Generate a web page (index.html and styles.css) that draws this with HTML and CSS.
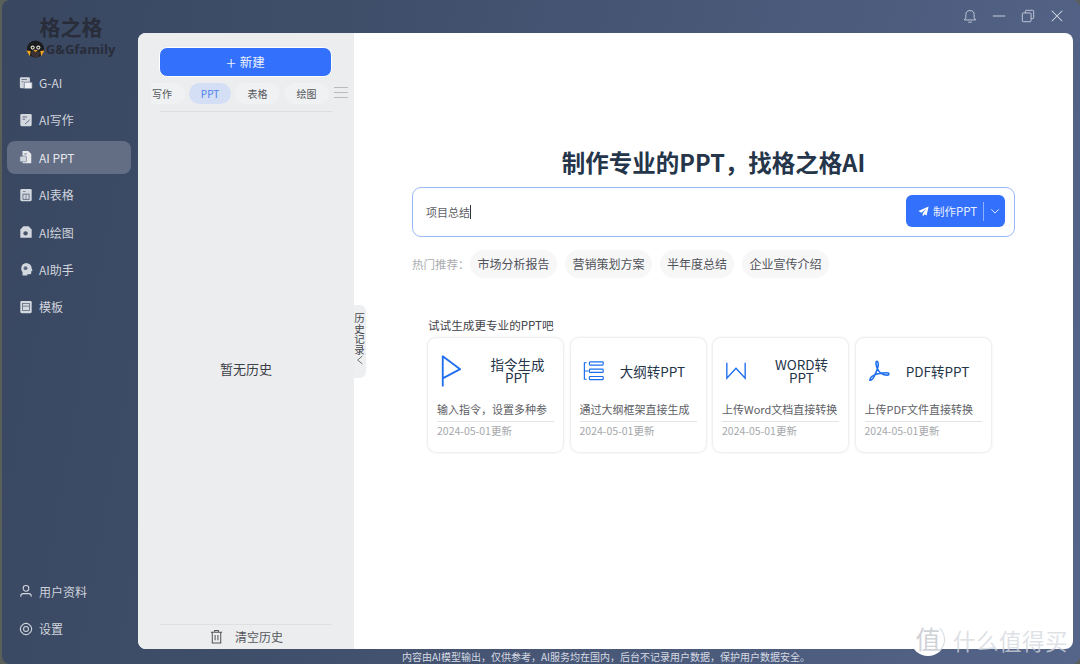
FILE: index.html
```html
<!DOCTYPE html>
<html lang="zh">
<head>
<meta charset="utf-8">
<title>格之格</title>
<link rel="stylesheet" href="styles.css">
</head>
<body>
<div class="window">
  <aside class="sidebar">
    <div class="brand">
      <div class="brand-name">格之格</div>
      <div class="brand-sub">
        <svg class="penguin" viewBox="0 0 20 20" width="19" height="19"><circle cx="10" cy="9.500" r="9" fill="#1b1a1c"/><ellipse cx="10" cy="14" rx="4.500" ry="4.500" fill="#3a3232"/><circle cx="7" cy="8" r="2.200" fill="#d8d4c8"/><circle cx="13" cy="8" r="2.200" fill="#d8d4c8"/><circle cx="7" cy="8" r="1" fill="#1b1a1c"/><circle cx="13" cy="8" r="1" fill="#1b1a1c"/><path d="M8 10.500h4l-2 2.500z" fill="#f0a020"/><path d="M.5 11l4.500.5-1 5.500zM19.500 11l-4.500.5 1 5.500z" fill="#eda41f"/></svg>
        <span>G&amp;Gfamily</span>
      </div>
    </div>
    <nav class="nav">
      <a class="nav-item"><svg class="nav-icon" viewBox="0 0 16 16"><rect x="1" y="1.500" width="11.500" height="12.500" rx="1.500" fill="#d3d7de"/><rect x="6" y="7" width="9" height="7.500" rx="1" fill="#eef0f3" stroke="#5d6a80" stroke-width=".8"/><path d="M3 4h6M3 6.500h2" stroke="#5d6a80"/></svg><span>G-AI</span></a>
      <a class="nav-item"><svg class="nav-icon" viewBox="0 0 16 16"><rect x="1.500" y="1" width="13" height="14" rx="1.500" fill="#d3d7de"/><path d="M4 4.500h5M4 7h3M7 12.500l5-4.500" stroke="#5d6a80" stroke-width="1.100"/></svg><span>AI写作</span></a>
      <a class="nav-item active"><svg class="nav-icon" viewBox="0 0 16 16"><path d="M4 1h6.500L14 4.500V15H4z" fill="#e6e8ec"/><rect x="1" y="7" width="7.500" height="6.500" rx="1" fill="#d3d7de" stroke="#667389" stroke-width=".7"/><path d="M6 4.500h3" stroke="#667389"/></svg><span>AI PPT</span></a>
      <a class="nav-item"><svg class="nav-icon" viewBox="0 0 16 16"><rect x="1.500" y="1" width="13" height="14" rx="1.500" fill="#d3d7de"/><rect x="4.500" y="7" width="7" height="6" fill="none" stroke="#5d6a80"/><path d="M4.500 4h3M8 7v6" stroke="#5d6a80" stroke-width=".8"/></svg><span>AI表格</span></a>
      <a class="nav-item"><svg class="nav-icon" viewBox="0 0 16 16"><path d="M5 1.500h6l3.500 3.500v9.500H1.500V5z" fill="#d3d7de"/><circle cx="7.500" cy="9.500" r="2.500" fill="#4a566c"/></svg><span>AI绘图</span></a>
      <a class="nav-item"><svg class="nav-icon" viewBox="0 0 16 16"><path d="M8 1a6.500 6.500 0 0 1 6.500 6.500l1 2.500-1.500.5v2a1.500 1.500 0 0 1-1.500 1.500H9.500v1.500H4v-4A6.500 6.500 0 0 1 8 1z" fill="#d3d7de"/><circle cx="7.500" cy="7" r="2.200" fill="#5d6a80"/></svg><span>AI助手</span></a>
      <a class="nav-item"><svg class="nav-icon" viewBox="0 0 16 16"><rect x="1.500" y="1" width="13" height="14" rx="1.500" fill="#d3d7de"/><rect x="4" y="4" width="8" height="8" fill="none" stroke="#5d6a80" stroke-width=".9"/><path d="M4 7h8" stroke="#5d6a80" stroke-width=".9"/></svg><span>模板</span></a>
    </nav>
    <div class="nav nav-bottom">
      <a class="nav-item"><svg class="nav-icon" viewBox="0 0 16 16" fill="none" stroke="#d3d7de" stroke-width="1.200"><circle cx="8" cy="5" r="3.200"/><path d="M2 14.500v-.5a3 3 0 0 1 3-3h6a3 3 0 0 1 3 3v.5"/></svg><span>用户资料</span></a>
      <a class="nav-item"><svg class="nav-icon" viewBox="0 0 16 16" fill="none" stroke="#d3d7de" stroke-width="1.200"><path d="M5 2.300l3-1 3 1 2.700 2.700.8 3-.8 3L11 13.700l-3 1-3-1L2.300 11l-.8-3 .8-3z" stroke-linejoin="round"/><circle cx="8" cy="8" r="2.800"/></svg><span>设置</span></a>
    </div>
  </aside>

  <div class="content">
    <header class="titlebar">
      <svg class="tb-icon" viewBox="0 0 16 16" fill="none" stroke="#c3cad8" stroke-width="1.100"><path d="M1.500 12.500h13l-1.800-2.500V6.500a4.700 4.700 0 0 0-9.400 0V10z" stroke-linejoin="round"/><path d="M6 15h4"/></svg>
      <svg class="tb-icon" viewBox="0 0 16 16" fill="none" stroke="#c3cad8" stroke-width="1.200"><path d="M1 8h14"/></svg>
      <svg class="tb-icon" viewBox="0 0 16 16" fill="none" stroke="#c3cad8" stroke-width="1.100"><rect x="1.500" y="4.500" width="10" height="10" rx="1"/><path d="M5 4.500V2.500a1 1 0 0 1 1-1h7.500a1 1 0 0 1 1 1V10a1 1 0 0 1-1 1h-2"/></svg>
      <svg class="tb-icon" viewBox="0 0 16 16" fill="none" stroke="#d5dae4" stroke-width="1.200"><path d="M2 2l12 12M14 2L2 14"/></svg>
    </header>

    <div class="panel">
      <section class="history">
        <button class="new-btn"><span class="plus">+</span>新建</button>
        <div class="tabs-row">
          <div class="tabs">
            <span class="tab tab-cut">写作</span>
            <span class="tab tab-ppt">PPT</span>
            <span class="tab">表格</span>
            <span class="tab">绘图</span>
          </div>
          <div class="burger"><i></i><i></i><i></i></div>
        </div>
        <div class="history-body">暂无历史</div>
        <div class="history-foot">
          <svg class="trash" viewBox="0 0 16 16" fill="none" stroke="#555" stroke-width="1.100"><path d="M2 3.500h12M6 3.500V1.500h4v2M3.500 3.500V15h9V3.500M6.500 6.500v5.500M9.500 6.500v5.500"/></svg>
          <span>清空历史</span>
        </div>
        <div class="history-toggle"><span class="toggle-text">历史记录</span><svg viewBox="0 0 10 12" width="8" height="10" fill="none" stroke="#555" stroke-width="1"><path d="M8 1L2 6l6 5"/></svg></div>
      </section>

      <main class="main">
        <h1 class="headline">制作专业的PPT，找格之格AI</h1>
        <div class="search">
          <span class="search-text">项目总结<i class="caret"></i></span>
          <div class="make-btn">
            <svg viewBox="0 0 14 14" width="11" height="11"><path d="M13.500.5L.5 6.500l4 2 6-5-4.500 6v4l2.500-3 2.500 1.500z" fill="#fff"/></svg>
            <span class="make-label">制作PPT</span>
            <i class="make-sep"></i>
            <svg viewBox="0 0 12 12" width="10" height="10" fill="none" stroke="#fff" stroke-width="1"><path d="M1.500 4l4.500 4.500L10.500 4"/></svg>
          </div>
        </div>
        <div class="hot">
          <span class="hot-label">热门推荐：</span>
          <span class="chip">市场分析报告</span>
          <span class="chip">营销策划方案</span>
          <span class="chip">半年度总结</span>
          <span class="chip">企业宣传介绍</span>
        </div>
        <div class="try-title">试试生成更专业的PPT吧</div>
        <div class="cards">
          <article class="card">
            <div class="card-head">
              <svg class="card-icon" viewBox="0 0 24 36" fill="none" stroke="#1f6fee" stroke-width="2"><path d="M3 1v34M3 2l19 14L3 26" stroke-linejoin="round"/></svg>
              <div class="card-title">指令生成PPT</div>
            </div>
            <p class="card-desc">输入指令，设置多种参</p>
            <div class="card-date">2024-05-01更新</div>
          </article>
          <article class="card">
            <div class="card-head">
              <svg class="card-icon" viewBox="0 0 24 24" fill="none" stroke="#1f6fee" stroke-width="1.300"><path d="M4 3H1.500v18H4M1.500 12H6"/><rect x="7" y="2" width="15" height="3.500" rx=".8"/><rect x="7" y="10" width="15" height="3.500" rx=".8"/><rect x="7" y="18" width="15" height="3.500" rx=".8"/></svg>
              <div class="card-title">大纲转PPT</div>
            </div>
            <p class="card-desc">通过大纲框架直接生成</p>
            <div class="card-date">2024-05-01更新</div>
          </article>
          <article class="card">
            <div class="card-head">
              <svg class="card-icon" viewBox="0 0 24 24" fill="none" stroke="#1f6fee" stroke-width="1.500"><path d="M2 3v17l10-11 10 11V3"/></svg>
              <div class="card-title title-word">WORD转PPT</div>
            </div>
            <p class="card-desc">上传Word文档直接转换</p>
            <div class="card-date">2024-05-01更新</div>
          </article>
          <article class="card">
            <div class="card-head">
              <svg class="card-icon" viewBox="0 0 24 24" fill="none" stroke="#1f6fee" stroke-width="1.700"><path d="M2 22c3 1 7-8 9-15 .6-3-.2-5.500-1.300-5.500S8 4 10 9c2 4.500 6 7.500 11 7.500 2.500 0 2.500-2.500 0-2.500-4 0-13 1-17 4-2 2-2 3.500-2 4z" stroke-linejoin="round"/></svg>
              <div class="card-title">PDF转PPT</div>
            </div>
            <p class="card-desc">上传PDF文件直接转换</p>
            <div class="card-date">2024-05-01更新</div>
          </article>
        </div>
      </main>
    </div>

    <footer class="notice">内容由AI模型输出，仅供参考，AI服务均在国内，后台不记录用户数据，保护用户数据安全。</footer>
  </div>
</div>
<div class="watermark"><span class="wm-mark">值</span><span class="wm-text">什么值得买</span></div>
</body>
</html>
```

FILE: styles.css
```css
* { box-sizing: border-box; }
html, body { margin: 0; padding: 0; height: 100%; }
body {
  width: 1080px;
  height: 664px;
  overflow: hidden;
  background: #5b5f5a;
  font-family: "Noto Sans CJK SC", "Noto Sans", sans-serif;
  position: relative;
}
.window {
  height: 664px;
  margin-left: 2px;
  border-radius: 8px;
  display: flex;
  background: linear-gradient(100deg, #394761 0%, #3f4e69 30%, #55658a 100%);
  overflow: hidden;
}
.sidebar {
  width: 136px;
  flex: none;
  display: flex;
  flex-direction: column;
  padding-bottom: 19px;
}
.brand {
  height: 66px;
  padding-top: 11px;
  display: flex;
  flex-direction: column;
  align-items: center;
}
.brand-name {
  font-size: 21px;
  line-height: 30px;
  font-weight: 700;
  color: #282d39;
  margin-left: 2px;
  font-family: "Noto Sans CJK SC", serif;
}
.brand-sub {
  display: flex;
  align-items: center;
  gap: 1px;
  margin-top: -1px;
  margin-left: 1px;
  font-family: "Open Sans", sans-serif;
  font-weight: 700;
  font-size: 13px;
  line-height: 19px;
  color: #282d39;
}
.penguin { flex: none; }
.nav { display: flex; flex-direction: column; gap: 4.400px; padding-left: 5px; }
.nav-bottom { margin-top: auto; }
.nav-item {
  width: 124px;
  height: 33px;
  border-radius: 8px;
  padding-left: 12px;
  display: flex;
  align-items: center;
  gap: 6px;
  font-size: 12px;
  color: #d0d4dc;
}
.nav-item.active { background: #636e84; color: #e6e8ec; }
.nav-icon { width: 14px; height: 14px; flex: none; }
.content {
  flex: 1;
  min-width: 0;
  display: flex;
  flex-direction: column;
}
.titlebar {
  height: 33px;
  flex: none;
  display: flex;
  align-items: center;
  justify-content: flex-end;
  gap: 15px;
  padding: 0 16px 1px 0;
}
.tb-icon { width: 14px; height: 14px; }
.panel {
  height: 616px;
  flex: none;
  margin-right: 7px;
  display: flex;
  background: #fff;
  border-radius: 8px;
  overflow: hidden;
}
.history {
  width: 216px;
  flex: none;
  background: #ecedef;
  display: flex;
  flex-direction: column;
  padding: 14px 22px 0 21px;
  position: relative;
  overflow: visible;
}
.new-btn {
  height: 30px;
  width: 173px;
  flex: none;
  border: 1px solid #fff;
  border-radius: 8px;
  background: #3370fb;
  color: #eef3ff;
  font: 12.500px/1 "Noto Sans CJK SC", sans-serif;
  display: flex;
  align-items: center;
  justify-content: center;
  gap: 4px;
  padding: 0;
}
.plus { font-size: 18px; font-weight: 300; line-height: 1; }
.tabs-row {
  margin: 6px -20px 0 -8px;
  height: 28px;
  flex: none;
  display: flex;
  align-items: flex-start;
  gap: 5px;
}
.tabs { display: flex; gap: 4px; width: 178px; overflow: hidden; height: 21px; }
.tab {
  flex: none;
  width: 45px;
  height: 21px;
  border-radius: 11px;
  background: #f0f1f2;
  color: #55585e;
  font-size: 10px;
  line-height: 21px;
  text-align: center;
}
.tab-cut { width: 34px; padding-right: 13px; text-align: right; border-radius: 0 11px 11px 0; padding-left: 0; white-space: nowrap; }
.tab-ppt { width: 42px; background: #d4dff5; color: #4d82ef; }
.burger { width: 14px; display: flex; flex-direction: column; gap: 4px; padding-top: 4px; }
.burger i { display: block; height: 1px; background: #b9bbbf; }
.history-body {
  flex: 1;
  border-top: 1px solid #dcdde0;
  margin-left: 1px;
  display: flex;
  align-items: center;
  justify-content: center;
  font-size: 13px;
  color: #3c4047;
}
.history-foot {
  height: 25px;
  flex: none;
  border-top: 1px solid #dfe0e3;
  margin-left: 1px;
  display: flex;
  align-items: center;
  justify-content: center;
  gap: 11px;
  font-size: 12px;
  color: #55585e;
  padding-bottom: 2px;
}
.trash { width: 15px; height: 15px; }
.history-toggle {
  position: absolute;
  left: 216px;
  top: 272px;
  width: 12px;
  height: 73px;
  background: #eeeff0;
  border-radius: 0 6px 6px 0;
  display: flex;
  flex-direction: column;
  align-items: center;
  padding: 8px 1px 0 0;
  gap: 0;
  z-index: 2;
}
.toggle-text {
  writing-mode: vertical-rl;
  font-size: 10.500px;
  line-height: 11px;
  color: #44474d;
}
.main { flex: 1; min-width: 0; padding: 113px 58px 0 58px; }
.headline {
  margin: 0;
  text-align: center;
  font-size: 23.500px;
  line-height: 32px;
  font-weight: 700;
  color: #25354a;
}
.search {
  margin-top: 9px;
  height: 50px;
  width: 603px;
  border: 1px solid #98b8fa;
  border-radius: 9px;
  display: flex;
  align-items: center;
  justify-content: space-between;
  padding: 0 9px 2px 13px;
}
.search-text { font-size: 11px; color: #5d6065; display: flex; align-items: center; padding-top: 2px; }
.caret { display: inline-block; width: 1px; height: 14px; background: #333; }
.make-btn {
  width: 99px;
  height: 32px;
  border-radius: 6px;
  background: #3370fb;
  color: #e8effe;
  display: flex;
  align-items: center;
  padding-left: 12px;
  font-size: 11.500px;
}
.make-label { margin-left: 4px; }
.make-sep { width: 1px; height: 19px; background: #8fb0f8; margin: 0 6px 0 6px; }
.hot {
  margin-top: 13px;
  display: flex;
  align-items: center;
  gap: 8px;
  font-size: 11.500px;
}
.hot-label { color: #aaacaf; width: 50px; white-space: nowrap; }
.chip {
  height: 28px;
  line-height: 28px;
  padding: 0 7.500px;
  border-radius: 14px;
  background: #f7f7f8;
  color: #4f5258;
  font-size: 12px;
  white-space: nowrap;
}
.chip:nth-of-type(4) { padding: 0 7px; }
.try-title {
  margin: 39px 0 0 16px;
  font-size: 11.600px;
  line-height: 16px;
  color: #3f4349;
}
.cards {
  margin: 5px 0 0 16px;
  display: grid;
  grid-template-columns: repeat(4, 135px);
  gap: 7.500px;
}
.card {
  height: 114px;
  border-radius: 8px;
  background: #fff;
  box-shadow: 0 0 3px rgba(0,0,0,.18);
  padding: 0 9px;
  display: flex;
  flex-direction: column;
}
.card-head {
  height: 60px;
  margin-top: 3px;
  flex: none;
  display: flex;
  align-items: center;
}
.card-icon { width: 22px; height: 22px; flex: none; margin-left: 3px; }
.card:first-child .card-icon { height: 36px; }
.card-title {
  flex: 1;
  text-align: center;
  font-size: 13.500px;
  line-height: 13px;
  color: #25354a;
  padding: 0 5px 0 24px;
}
.card .title-word { padding: 0 6px 0 23px; }
.card:nth-child(2) .card-title, .card:nth-child(4) .card-title { padding: 0 0 0 4px; }
.card-desc {
  margin: 3px 0 0;
  height: 18px;
  font-size: 11px;
  line-height: 10px;
  color: #5d6065;
  white-space: nowrap;
  border-bottom: 1px solid #e3e4e6;
}
.card-date { font-size: 10.500px; line-height: 18px; color: #a6a8ab; }
.notice {
  flex: 1;
  font-size: 10px;
  line-height: 15px;
  color: #d6dbe5;
  padding-left: 264px;
}
.watermark {
  position: absolute;
  left: 911px;
  top: 623px;
  display: flex;
  align-items: center;
  gap: 8px;
  color: rgba(212,215,221,.75);
}
.wm-mark {
  width: 34px;
  height: 33px;
  border-radius: 50%;
  border: 1px solid transparent;
  border-right-color: #d5d7dc;
  background: #fff;
  color: #cfd2d7;
  font-size: 25px;
  line-height: 29px;
  text-align: center;
}
.wm-text { font-size: 22.500px; line-height: 30px; letter-spacing: .5px; white-space: nowrap; }
```
